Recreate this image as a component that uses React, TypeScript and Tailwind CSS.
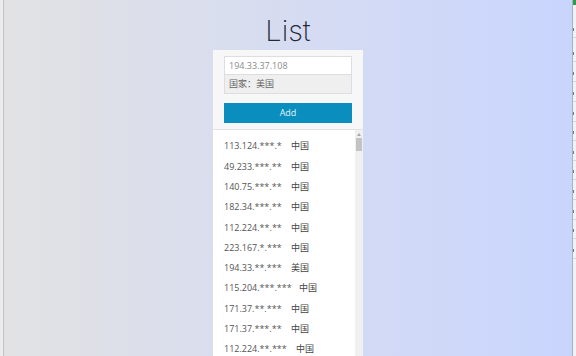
import React from "react";

// ip, country, left offset of the country column
const rows: [string, string, number][] = [
  ["113.124.***.*", "中国", 67],
  ["49.233.***.**", "中国", 67],
  ["140.75.***.**", "中国", 67],
  ["182.34.***.**", "中国", 67],
  ["112.224.**.**", "中国", 67],
  ["223.167.*.***", "中国", 67],
  ["194.33.**.***", "美国", 67],
  ["115.204.***.***", "中国", 75],
  ["171.37.**.***", "中国", 67],
  ["171.37.***.**", "中国", 67],
  ["112.224.**.***", "中国", 72],
];

const ticks = [29, 53, 73, 93, 113, 132, 152, 171, 191, 211, 230, 250];

export default function App() {
  return (
    <div
      className="relative flex h-[356px] w-[576px] overflow-hidden bg-gradient-to-r from-[#e2e2e3] via-[#d6dcf1] to-[#c9d5fe]"
      style={{ fontFamily: '"Open Sans", "Noto Sans CJK SC", sans-serif' }}
    >
      {/* left window edge */}
      <div className="h-full w-[3px] bg-[#ececec]" />
      <div className="h-full w-[1px] bg-[#c2c2c2]" />

      <div className="flex flex-1 flex-col items-center">
        <h1
          className="mt-[12px] h-[38px] text-[29px] font-extralight leading-[38px] text-[#252838]"
          style={{ fontFamily: "Inter, sans-serif" }}
        >
          List
        </h1>

        <div className="flex w-[150px] flex-1 flex-col bg-[#f7f7f7]">
          <div className="px-[11px] pt-[6px]">
            <div className="flex h-[19px] items-center border border-[#dedede] bg-white px-[4px] text-[9px] text-[#8a8a8a]">
              194.33.37.108
            </div>
            <div className="flex h-[19px] items-center border border-t-0 border-[#dedede] bg-[#efefef] px-[4px] text-[9px] text-[#666]">
              国家：美国
            </div>
            <button className="mt-[9px] flex h-[20px] w-full items-center justify-center bg-[#0a8ebd] text-[9px] text-[#e6f4fa]">
              Add
            </button>
          </div>

          <div className="mt-[6px] flex flex-1 border-t border-[#e2e2e2] bg-white">
            <div className="flex-1 pl-[11px] pt-[6px]">
              {rows.map(([ip, country, offset], i) => (
                <div
                  key={i}
                  className="flex h-[20.3px] items-center whitespace-nowrap text-[9px] text-[#555]"
                >
                  <span className="inline-block shrink-0" style={{ width: offset }}>
                    {ip}
                  </span>
                  <span className="text-[9px] text-[#444]">{country}</span>
                </div>
              ))}
            </div>
            <div className="relative w-[8px] bg-[#f0f0f0]">
              <div className="absolute left-[2px] top-[3px] h-0 w-0 border-x-[2px] border-b-[3px] border-x-transparent border-b-[#a8a8a8]" />
              <div className="absolute left-[1px] top-[8px] h-[13px] w-[6px] bg-[#c3c3c3]" />
            </div>
          </div>
        </div>
      </div>

      {/* right edge (neighbouring window) */}
      <div className="h-full w-[1px] bg-[#a9b0c4]" />
      <div className="relative h-full w-[3px] bg-[#f2f2f2]">
        <div className="absolute left-0 top-0 h-[5px] w-full bg-[#2e9a4a]" />
        {ticks.map((t) => (
          <div key={t} className="absolute left-0 h-[1px] w-full bg-[#d8d8d8]" style={{ top: t + 8 }} />
        ))}
        {ticks.map((t) => (
          <div key={"m" + t} className="absolute left-0 h-[3px] w-[1px] bg-[#777]" style={{ top: t - 1 }} />
        ))}
      </div>
    </div>
  );
}
